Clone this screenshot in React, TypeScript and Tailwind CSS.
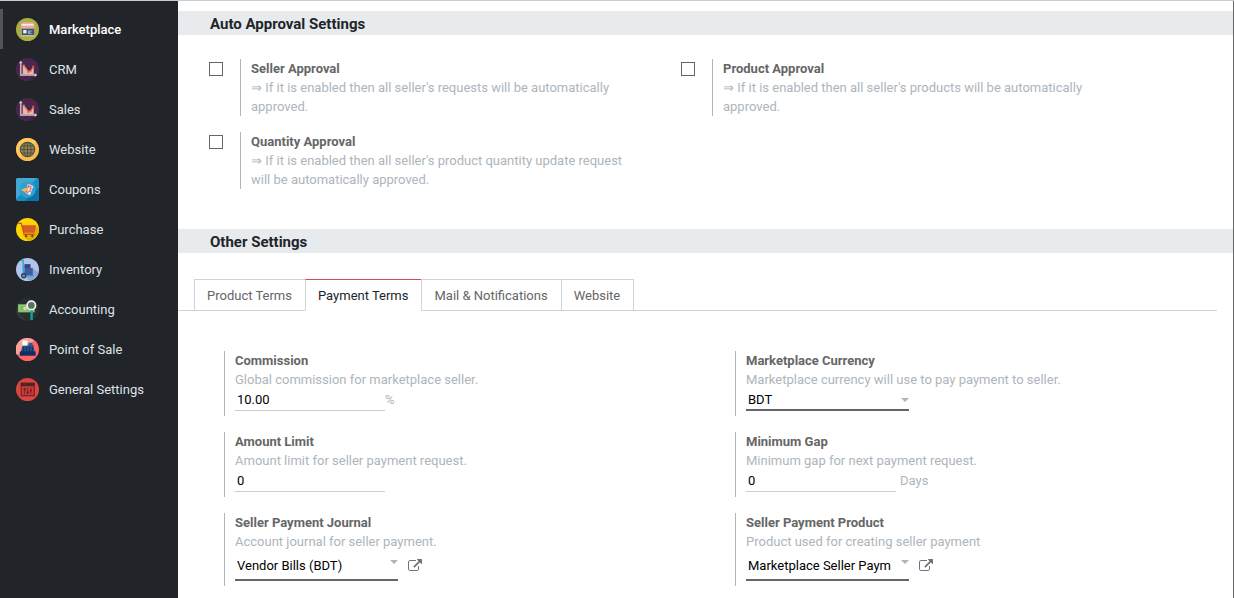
import { useState } from 'react';
import type { ReactNode } from 'react';
import clsx from 'clsx';

/* ── App icons ── */
const MarketplaceIcon = () => (
  <>
    <circle cx="12" cy="12" r="12" fill="#acad45" />
    <rect x="6" y="10" width="13" height="9" fill="#e9e4da" />
    <path d="M6 5h12l1 5H5z" fill="#f3ece4" />
    <path d="M5 8h14.500v2.500H5z" fill="#eda79c" />
    <path d="M6 4.500h12.500v1.500H6z" fill="#e6a08d" />
    <rect x="6" y="11" width="13" height="7" fill="#3f5468" />
    <rect x="7.500" y="12.500" width="3.500" height="3.500" fill="#e8f2f5" />
    <path d="M12.500 13h4.500v1h-2v2h2v.8h-4.500z" fill="#93a9b8" />
  </>
);

const ChartIcon = () => (
  <>
    <circle cx="12" cy="12" r="12" fill="#4b274d" />
    <path d="M7 18 20 19.500 12 24A12 12 0 0 0 22 18.500z" fill="#391c3c" />
    <path d="M7 7.500 8.500 7.500 13 13.500 15.500 13 18.500 9V17H7z" fill="#f0b5a5" />
    <path d="m8 8 4.500 6.500 3-1.500 2.500-4" fill="none" stroke="#dd6550" strokeWidth=".8" />
    <circle cx="8" cy="8" r="1.200" fill="#e87942" />
    <circle cx="13" cy="14.500" r="1.200" fill="#ee5d3c" />
    <circle cx="15.500" cy="13.500" r="1" fill="#ee5d3c" />
    <circle cx="18" cy="9" r="1.200" fill="#e2553f" />
    <path d="M5 4.500v13.200H20.500" fill="none" stroke="#cdc9d4" strokeWidth="1.400" />
    <path d="M3 5.500 5 2.800 7 5.500zM19.500 15.700l2.700 2-2.700 2z" fill="#cdc9d4" />
  </>
);

const GlobeIcon = () => (
  <>
    <circle cx="12" cy="12" r="12" fill="#f9ba50" />
    <path d="M3.500 3.500A12 12 0 0 1 21 4L4 20.500A12 12 0 0 1 3.500 3.500z" fill="#ffc95c" />
    <circle cx="12" cy="12" r="7.500" fill="#94834e" stroke="#4c5147" strokeWidth="1.200" />
    <path d="M12 4.500v15M4.500 12h15M5.500 8.300h13M5.500 15.700h13" stroke="#4c5147" strokeWidth="1" />
    <ellipse cx="12" cy="12" rx="3.800" ry="7.500" fill="none" stroke="#4c5147" strokeWidth="1" />
  </>
);

const CouponsIcon = () => (
  <>
    <rect width="24" height="24" rx="2" fill="#168ec2" />
    <path d="M2 0h20L0 22V2a2 2 0 0 1 2-2z" fill="#41a9d4" />
    <path d="M24 10v12a2 2 0 0 1-2 2H9z" fill="#0b74aa" />
    <circle cx="12" cy="12" r="8.500" fill="#329fce" />
    <path d="m12.500 6 5.500 2.500-3.500 9.500-5-3z" fill="#f3f7f6" />
    <path d="m13 6.500 1.500 2 2-.5-.8 2.500 1.300 1-1.800.8.300 2-2 .2-1 2-1-1.500-2 .5.500-2-1.500-1.500 2.500-.5z" fill="#e9644f" />
    <path d="m5 12.500 4.500-2 3 1-3 3z" fill="#f5bd4f" />
    <path d="m12 10.500 3-1-1 4-2 1z" fill="#dceef5" />
  </>
);

const CartIcon = () => (
  <>
    <circle cx="12" cy="12" r="12" fill="#ffd400" />
    <path d="m20 8 3.800 3A12 12 0 0 1 13 23.900L7 18z" fill="#e2b100" />
    <path d="M6 7.500h15l-1.500 8H8z" fill="#d85c27" />
    <path d="M2.500 5.500H5.500L8.500 17.200H19.500" fill="none" stroke="#c74e27" strokeWidth="1.300" />
    <circle cx="10.500" cy="19" r="1.200" fill="#5a4934" />
    <circle cx="17" cy="19" r="1.200" fill="#5a4934" />
  </>
);

const InventoryIcon = () => (
  <>
    <circle cx="12" cy="12" r="12" fill="#b0c5ee" />
    <path d="m18 11 5.700 4A12 12 0 0 1 14 23.800L9 19z" fill="#8fa6d3" />
    <path d="M9 6.500h6v4H17.500v8H8.500z" fill="#43599c" />
    <path d="M9 6.500h6v4H9z" fill="#344783" />
    <path d="M5.500 2.500H7.500V18.500H18.500" fill="none" stroke="#24a4c8" strokeWidth="1.400" />
    <circle cx="8" cy="18.500" r="2.200" fill="#71869b" stroke="#283b58" strokeWidth="1.200" />
  </>
);

const AccountingIcon = () => (
  <>
    <circle cx="12" cy="12" r="12" fill="#292e31" />
    <path d="M0 13.500 2 15l8 8.500a12 12 0 0 1-10-10z" fill="#363a3c" />
    <rect x="2" y="6.500" width="17.500" height="8.500" fill="#7fb964" />
    <rect x="3.500" y="8" width="14.500" height="5.500" fill="none" stroke="#a6ce87" strokeWidth=".8" />
    <circle cx="9.500" cy="10.800" r="2" fill="#c6e3a5" />
    <circle cx="16" cy="7.700" r="4.400" fill="#5b725f" stroke="#f1f4f2" strokeWidth="1.800" />
    <path d="M16.300 13v10" stroke="#16a094" strokeWidth="2.600" />
  </>
);

const RegisterIcon = () => (
  <>
    <circle cx="12" cy="12" r="12" fill="#ff6567" />
    <path d="M2.500 4.500A12 12 0 0 1 19 2.300L1 18a12 12 0 0 1 1.500-13.500z" fill="#ffa09a" />
    <path d="M7 7h11l1.500 7.500H5z" fill="#245080" />
    <path d="M13 5h4v3h-4z" fill="#315f8f" />
    <path d="M6.500 2.500h5.500v5.500H6.500z" fill="#f4f8f8" />
    <path d="M4 14h16.500v4.500H4z" fill="#142b63" />
    <path d="M8 9.500v5M11 9.500v5M14 9.500v5M17 9.500v5" stroke="#142b63" strokeWidth="1" />
  </>
);

const SlidersIcon = () => (
  <>
    <circle cx="12" cy="12" r="12" fill="#da4540" />
    <rect x="5.500" y="5.500" width="13.500" height="13" fill="#c73b38" stroke="#6b2227" strokeWidth="1.200" />
    <path d="M5 5h14.500v3.500H5z" fill="#4f2328" />
    <path d="M9 10v7M12.200 10v7M15.500 10v7" stroke="#7c2528" strokeWidth="1" />
    <path d="M8 12h2M11.200 15h2M14.500 13h2" stroke="#541f25" strokeWidth="1.600" />
  </>
);

const apps = [
  { label: 'Marketplace', icon: MarketplaceIcon },
  { label: 'CRM', icon: ChartIcon },
  { label: 'Sales', icon: ChartIcon },
  { label: 'Website', icon: GlobeIcon },
  { label: 'Coupons', icon: CouponsIcon },
  { label: 'Purchase', icon: CartIcon },
  { label: 'Inventory', icon: InventoryIcon },
  { label: 'Accounting', icon: AccountingIcon },
  { label: 'Point of Sale', icon: RegisterIcon },
  { label: 'General Settings', icon: SlidersIcon },
];

const approvals = [
  { id: 'seller', label: 'Seller Approval', help: "⇒ If it is enabled then all seller's requests will be automatically approved." },
  { id: 'product', label: 'Product Approval', help: "⇒ If it is enabled then all seller's products will be automatically approved." },
  { id: 'quantity', label: 'Quantity Approval', help: "⇒ If it is enabled then all seller's product quantity update request will be automatically approved." },
];

const tabs = ['Product Terms', 'Payment Terms', 'Mail & Notifications', 'Website'];

function SectionTitle({ children }: { children: ReactNode }) {
  return (
    <h2 className="h-6 bg-[#e7ebee] pl-8 text-[15px] leading-[26px] font-bold text-[#212529]">{children}</h2>
  );
}

function Field({ id, label, help, children }: { id: string; label: string; help: string; children: ReactNode }) {
  return (
    <div className="ml-[30px] border-l border-[#b4b4b4] pb-[5px] pl-2.5 text-[#adb5bd]">
      <label htmlFor={id} className="block font-bold text-[#666]">{label}</label>
      <p>{help}</p>
      <div className="flex">{children}</div>
    </div>
  );
}

function NumberInput({ id, value }: { id: string; value: string }) {
  return (
    <input
      id={id}
      type="text"
      defaultValue={value}
      className="h-[22px] w-[150px] border-b border-[#ccc] px-0.5 text-black outline-none"
    />
  );
}

function SelectInput({ id, value, tall }: { id: string; value: string; tall?: boolean }) {
  return (
    <div className="relative w-[163px]">
      <select
        id={id}
        className={clsx(
          'block w-full appearance-none border-b-2 border-[#666] pr-3.5 pl-0.5 text-black outline-none',
          tall ? 'h-[30px]' : 'h-[22px]'
        )}
      >
        <option>{value}</option>
      </select>
      <svg viewBox="0 0 8 4" className="pointer-events-none absolute top-[9px] right-0 h-1 w-2" fill="#adb5bd">
        <path d="M0 0h8L4 4z" />
      </svg>
    </div>
  );
}

function OpenRecord({ label }: { label: string }) {
  return (
    <button type="button" aria-label={label} className="ml-2.5 text-[#6c757d]">
      <svg viewBox="0 0 1792 1792" className="size-[14px]" fill="currentColor">
        <path d="M1408 928v320q0 119-84.500 203.500t-203.500 84.500h-832q-119 0-203.500-84.500t-84.500-203.500v-832q0-119 84.500-203.500t203.500-84.500h704q14 0 23 9t9 23v64q0 14-9 23t-23 9h-704q-66 0-113 47t-47 113v832q0 66 47 113t113 47h832q66 0 113-47t47-113v-320q0-14 9-23t23-9h64q14 0 23 9t9 23zm384-864v512q0 26-19 45t-45 19-45-19l-176-176-652 652q-10 10-23 10t-23-10l-114-114q-10-10-10-23t10-23l652-652-176-176q-19-19-19-45t19-45 45-19h512q26 0 45 19t19 45z" />
      </svg>
    </button>
  );
}

export default function App() {
  const [activeApp, setActiveApp] = useState('Marketplace');
  const [activeTab, setActiveTab] = useState('Payment Terms');

  return (
    <div className="flex min-h-screen border-t border-[#ccc] bg-white font-[Roboto,sans-serif] text-[13px] leading-[19px]">
      {/* ── Sidebar ── */}
      <nav className="w-[178px] shrink-0 bg-[#212529] pt-2">
        {apps.map(({ label, icon: Icon }) => (
          <a
            key={label}
            href="#"
            onClick={() => setActiveApp(label)}
            className={clsx(
              'flex h-10 items-center gap-2.5 border-l-3 pl-[13px]',
              activeApp === label ? 'border-[#54535a] font-medium text-white' : 'border-transparent text-[#dee2e6]'
            )}
          >
            <svg viewBox="0 0 24 24" className="size-[23px] shrink-0"><Icon /></svg>
            {label}
          </a>
        ))}
      </nav>

      {/* ── Settings ── */}
      <main className="min-w-0 flex-1 border-r border-[#666] pt-2.5">
        <SectionTitle>Auto Approval Settings</SectionTitle>
        <div className="mt-6 mb-10 grid max-w-[960px] grid-cols-2 gap-y-4 pl-4">
          {approvals.map(({ id, label, help }) => (
            <div key={id} className="flex items-start pr-7 pl-[15px]">
              <input
                id={id}
                type="checkbox"
                className="mt-[3px] mr-[17px] size-3.5 shrink-0 appearance-none border border-[#666] bg-white checked:bg-[#666]"
              />
              <div className="border-l border-[#b4b4b4] pl-2.5">
                <label htmlFor={id} className="block font-bold text-[#666]">{label}</label>
                <p className="text-[#adb5bd]">{help}</p>
              </div>
            </div>
          ))}
        </div>

        <SectionTitle>Other Settings</SectionTitle>
        <div role="tablist" className="mt-[26px] mr-4 flex border-b border-[#ced4da] pl-4">
          {tabs.map(tab => (
            <button
              key={tab}
              type="button"
              role="tab"
              aria-selected={activeTab === tab}
              onClick={() => setActiveTab(tab)}
              className={clsx(
                '-mb-px h-8 border pr-[13px] pl-3 not-first:-ml-px',
                activeTab === tab
                  ? 'border-[#ced4da] border-t-[#cf5054] border-b-white bg-white text-[#212529]'
                  : 'border-[#ced4da] text-[#666]'
              )}
            >
              {tab}
            </button>
          ))}
        </div>

        <div className="mt-10 mr-[17px] ml-4 grid grid-cols-2 gap-y-4 pb-3">
          <Field id="commission" label="Commission" help="Global commission for marketplace seller.">
            <NumberInput id="commission" value="10.00" />
            <span className="leading-[21px]">%</span>
          </Field>
          <Field id="currency" label="Marketplace Currency" help="Marketplace currency will use to pay payment to seller.">
            <SelectInput id="currency" value="BDT" />
          </Field>
          <Field id="amount-limit" label="Amount Limit" help="Amount limit for seller payment request.">
            <NumberInput id="amount-limit" value="0" />
          </Field>
          <Field id="minimum-gap" label="Minimum Gap" help="Minimum gap for next payment request.">
            <NumberInput id="minimum-gap" value="0" />
            <span className="ml-1 leading-[21px]">Days</span>
          </Field>
          <Field id="journal" label="Seller Payment Journal" help="Account journal for seller payment.">
            <SelectInput id="journal" value="Vendor Bills (BDT)" tall />
            <OpenRecord label="Open journal" />
          </Field>
          <Field id="product-payment" label="Seller Payment Product" help="Product used for creating seller payment">
            <SelectInput id="product-payment" value="Marketplace Seller Paym" tall />
            <OpenRecord label="Open product" />
          </Field>
        </div>
      </main>
    </div>
  );
}
